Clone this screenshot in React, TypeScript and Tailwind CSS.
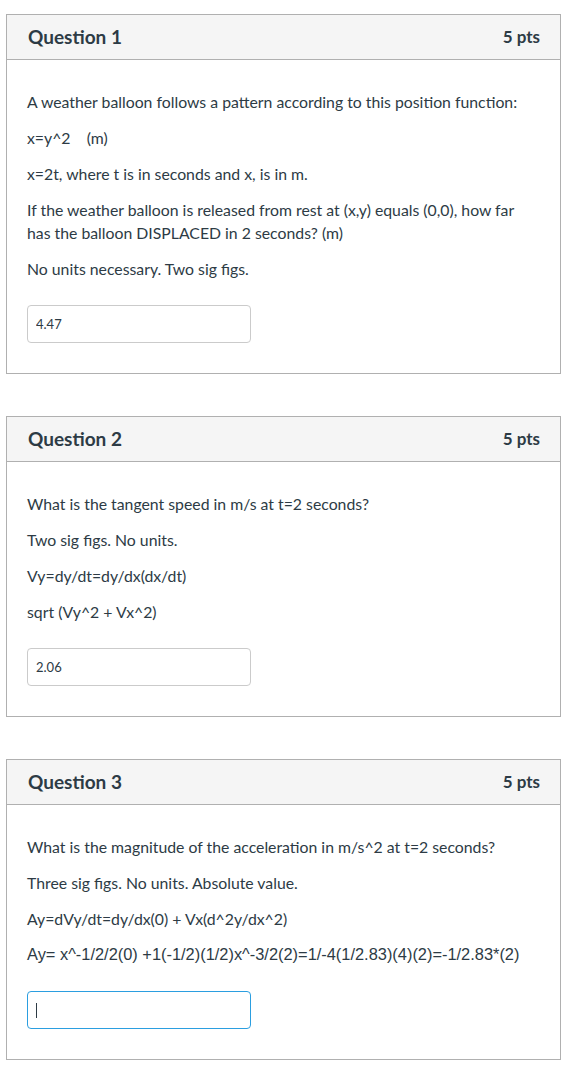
import React from "react";

const text = "text-[#2d3b45]";

function Card({
  title,
  children,
  answer,
  focused,
}: {
  title: string;
  children: React.ReactNode;
  answer?: string;
  focused?: boolean;
}) {
  return (
    <div className="border border-[#b0b0b0] bg-white">
      <div className="flex items-center justify-between h-[45px] bg-[#f5f5f5] border-b border-[#b0b0b0] pl-[21px] pr-[20px]">
        <span className="text-[19px] font-bold text-[#2d3b45]">{title}</span>
        <span className="text-[17px] font-bold text-[#2d3b45]">5 pts</span>
      </div>
      <div className="pl-[20px] pr-[20px] pt-[30px] pb-[30px]">
        <div className={`flex flex-col gap-[13px] text-[15.8px] leading-[23px] ${text}`}>{children}</div>
        <div className="mt-[25px]">
          {focused ? (
            <div className="w-[224px] h-[38px] border border-[#2b9ee0] rounded-[4px] flex items-center pl-[8px]">
              <span className="block w-[1px] h-[15px] bg-[#2d3b45]" />
            </div>
          ) : (
            <input
              readOnly
              value={answer}
              className="w-[224px] h-[38px] border border-[#cbcbcb] rounded-[4px] px-[8px] text-[13px] text-[#2d3b45] outline-none font-['Lato',sans-serif]"
            />
          )}
        </div>
      </div>
    </div>
  );
}

export default function App() {
  return (
    <div className="bg-white min-h-[1066px] pt-[14px] px-[6px] w-[561px] box-content font-['Lato','Noto_Sans',sans-serif]">
      <div className="w-[555px] flex flex-col gap-[42px]">
        <Card title="Question 1" answer="4.47">
          <p>A weather balloon follows a pattern according to this position function:</p>
          <p>x=y^2&nbsp;&nbsp;&nbsp; (m)</p>
          <p>x=2t, where t is in seconds and x, is in m.</p>
          <p>
            If the weather balloon is released from rest at (x,y) equals (0,0), how far has the balloon DISPLACED in 2 seconds? (m)
          </p>
          <p>No units necessary. Two sig figs.</p>
        </Card>
        <Card title="Question 2" answer="2.06">
          <p>What is the tangent speed in m/s at t=2 seconds?</p>
          <p>Two sig figs. No units.</p>
          <p>Vy=dy/dt=dy/dx(dx/dt)</p>
          <p>sqrt (Vy^2 + Vx^2)</p>
        </Card>
        <Card title="Question 3" focused>
          <p>What is the magnitude of the acceleration in m/s^2 at t=2 seconds?</p>
          <p>Three sig figs. No units. Absolute value.</p>
          <p>Ay=dVy/dt=dy/dx(0) + Vx(d^2y/dx^2)</p>
          <p className="font-['Liberation_Sans',Arial,sans-serif] text-[16.4px] whitespace-nowrap">
            Ay= x^-1/2/2(0) +1(-1/2)(1/2)x^-3/2(2)=1/-4(1/2.83)(4)(2)=-1/2.83*(2)
          </p>
        </Card>
      </div>
    </div>
  );
}
